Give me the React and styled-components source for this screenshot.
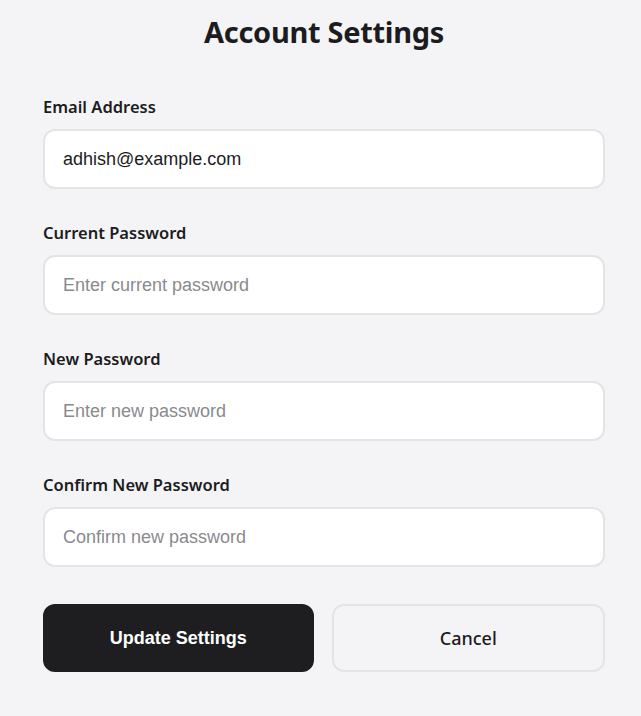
import styled, { createGlobalStyle } from 'styled-components';

const Global = createGlobalStyle`
  html, body {
    margin: 0;
    padding: 0;
    background: #f4f4f6;
  }
  * { box-sizing: border-box; }
`;

const Page = styled.div`
  padding: 14px 36px 40px 43px;
  font-family: "Noto Sans", "Open Sans", sans-serif;
  color: #1c1c1e;
`;

const Title = styled.h1`
  margin: 0 0 45px;
  text-align: center;
  font-size: 29px;
  font-weight: 700;
  line-height: 36px;
  letter-spacing: -0.3px;
`;

const Form = styled.form`
  display: flex;
  flex-direction: column;
  gap: 32px;
`;

const Field = styled.div`
  display: flex;
  flex-direction: column;
  gap: 10px;
`;

const Label = styled.label`
  font-size: 16.5px;
  font-weight: 600;
  line-height: 24px;
  color: #1c1c1e;
`;

const Input = styled.input`
  height: 60px;
  width: 100%;
  padding: 0 18px;
  border: 2px solid #e4e4e7;
  border-radius: 12px;
  background: #fff;
  font-family: "Liberation Sans", Arial, sans-serif;
  font-size: 18px;
  color: #1c1c1e;
  outline: none;

  &::placeholder {
    color: #8a8a8e;
  }
`;

const Actions = styled.div`
  display: flex;
  gap: 18px;
  margin-top: 5px;
`;

const Button = styled.button`
  flex: ${(p) => (p.primary ? '270px' : '273px')};
  height: 68px;
  border-radius: 12px;
  font-size: 18px;
  cursor: pointer;
  border: 2px solid ${(p) => (p.primary ? '#1e1e20' : '#e4e4e7')};
  background: ${(p) => (p.primary ? '#1e1e20' : '#f4f4f6')};
  color: ${(p) => (p.primary ? '#fff' : '#1c1c1e')};
  font-family: ${(p) => (p.primary ? '"Liberation Sans", Arial, sans-serif' : '"Noto Sans", sans-serif')};
  font-weight: ${(p) => (p.primary ? 700 : 500)};
`;

const fields = [
  { id: 'email', label: 'Email Address', type: 'email', value: 'adhish@example.com' },
  { id: 'current', label: 'Current Password', type: 'password', placeholder: 'Enter current password' },
  { id: 'new', label: 'New Password', type: 'password', placeholder: 'Enter new password' },
  { id: 'confirm', label: 'Confirm New Password', type: 'password', placeholder: 'Confirm new password' },
];

const App = () => {
  return (
    <Page>
      <Global />
      <Title>Account Settings</Title>
      <Form onSubmit={(e) => e.preventDefault()}>
        {fields.map((f) => (
          <Field key={f.id}>
            <Label htmlFor={f.id}>{f.label}</Label>
            <Input
              id={f.id}
              type={f.type}
              defaultValue={f.value}
              placeholder={f.placeholder}
            />
          </Field>
        ))}
        <Actions>
          <Button primary type="submit">Update Settings</Button>
          <Button type="button">Cancel</Button>
        </Actions>
      </Form>
    </Page>
  );
};

export default App;
